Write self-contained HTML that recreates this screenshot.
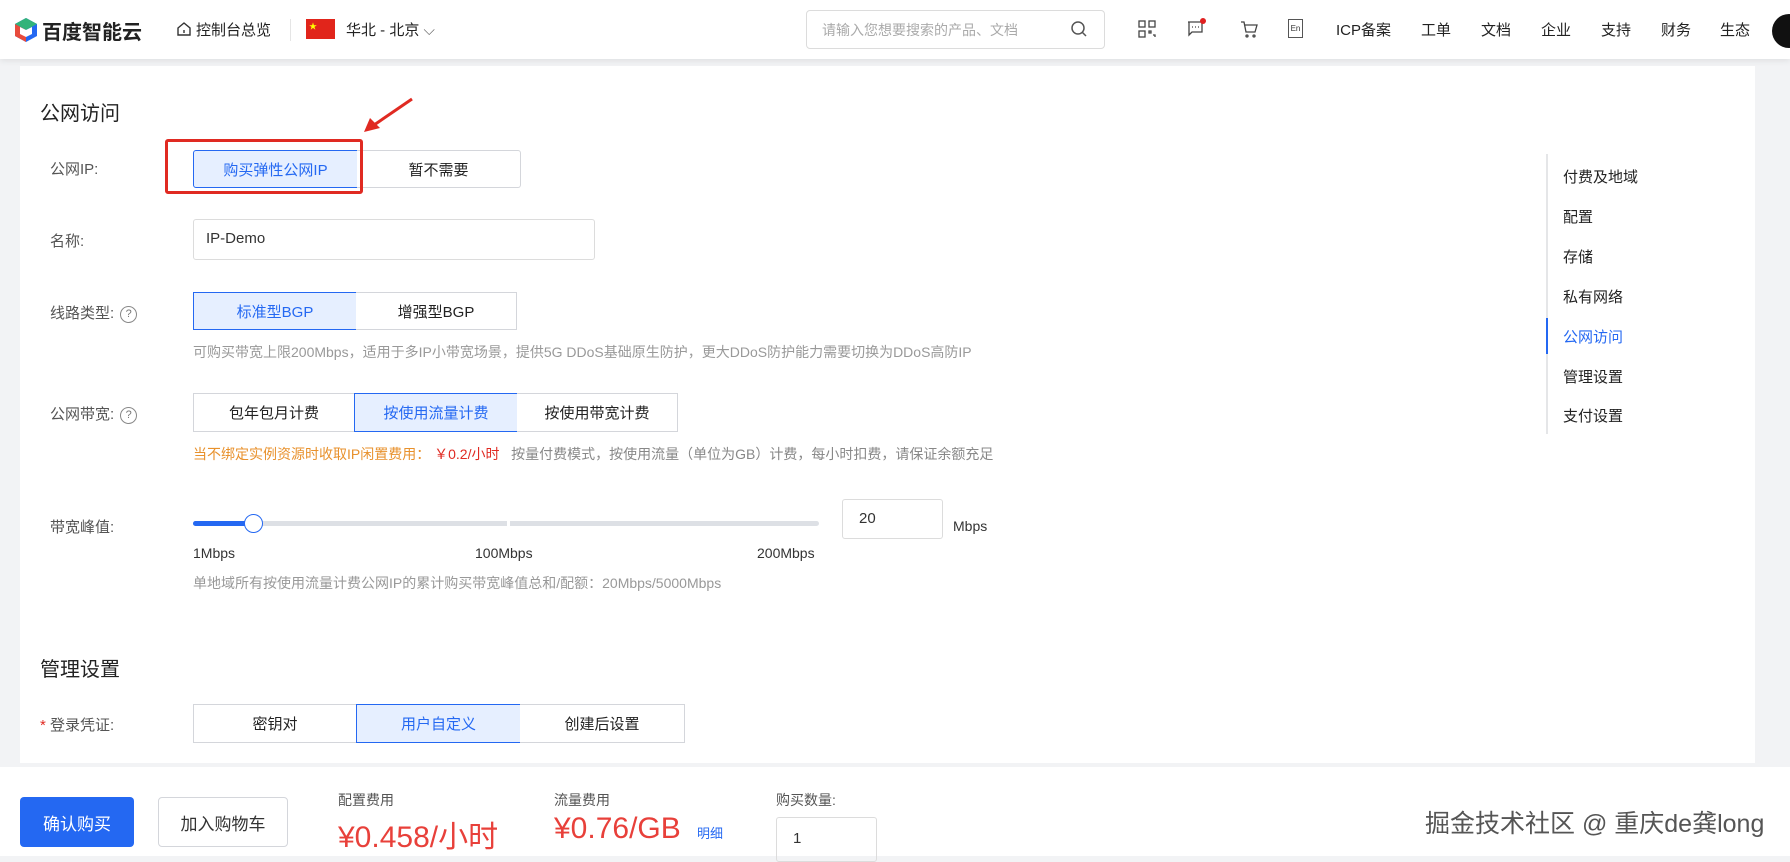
<!DOCTYPE html>
<html><head><meta charset="utf-8"><style>
*{margin:0;padding:0;box-sizing:border-box}
body{width:1790px;height:856px;overflow:hidden;background:#f2f3f5;font-family:"Liberation Sans","Noto Sans CJK SC",sans-serif;color:#333;position:relative;font-size:15px}
.a{position:absolute;white-space:nowrap}
.hdr{position:absolute;left:0;top:0;width:1790px;height:59px;background:#fff;box-shadow:0 2px 6px rgba(0,0,0,.08);z-index:2}
.card{position:absolute;left:20px;top:66px;width:1735px;height:697px;background:#fff}
.btn{position:absolute;border:1px solid #d4d6db;background:#fff;display:flex;align-items:center;justify-content:center;font-size:15px;color:#222}
.btn.on{background:#e6efff;border-color:#2468f2;color:#2468f2}
.lbl{position:absolute;font-size:15px;color:#555}
.help{display:inline-block;width:17px;height:17px;border:1.3px solid #888;border-radius:50%;font-size:11px;text-align:center;line-height:15px;color:#777;margin-left:6px;vertical-align:1px}
.gray{color:#999;font-size:14px}
.nav{font-size:15px;color:#222}
</style></head><body>
<div class="hdr">
  <svg class="a" style="left:14px;top:17px" width="24" height="26" viewBox="0 0 24 26"><path d="M12 1 L23 7 L23 19 L12 25 L1 19 L1 7Z" fill="#2468f2"/><path d="M12 1 L23 7 L12 13 L1 7Z" fill="#32b37a"/><path d="M1 7 L12 13 L12 25 L1 19Z" fill="#e84b3c"/><path d="M6 10 L12 13 L18 10 L18 17 L12 20 L6 17Z" fill="#fff"/></svg>
  <div class="a" style="left:42px;top:16px;font-size:20px;font-weight:bold;color:#222">百度智能云</div>
  <svg class="a" style="left:176px;top:21px" width="16" height="16" viewBox="0 0 16 16"><path d="M2 7 L8 2 L14 7 V14 H2Z" fill="none" stroke="#333" stroke-width="1.4"/><path d="M8 9v3" stroke="#333" stroke-width="1.4"/></svg>
  <div class="a nav" style="left:196px;top:19px">控制台总览</div>
  <div class="a" style="left:290px;top:19px;width:1px;height:22px;background:#e5e5e5"></div>
  <div class="a" style="left:306px;top:19px;width:29px;height:20px;background:#e1251b"><span style="position:absolute;left:3px;top:2px;color:#ff0;font-size:8px">★</span></div>
  <div class="a nav" style="left:346px;top:19px">华北 - 北京 <span style="color:#666">⌵</span></div>
  <div class="a" style="left:806px;top:10px;width:299px;height:39px;border:1px solid #dcdcdc;border-radius:4px"></div>
  <div class="a" style="left:822px;top:20px;color:#aaa;font-size:14px">请输入您想要搜索的产品、文档</div>
  <svg class="a" style="left:1070px;top:20px" width="18" height="18" viewBox="0 0 18 18"><circle cx="8" cy="8" r="6" fill="none" stroke="#555" stroke-width="1.5"/><path d="M12.5 12.5 L16 16" stroke="#555" stroke-width="1.5"/></svg>
  <svg class="a" style="left:1138px;top:20px" width="18" height="18" viewBox="0 0 18 18" fill="none" stroke="#444" stroke-width="1.3"><rect x="1" y="1" width="6" height="6"/><rect x="11" y="1" width="6" height="6"/><rect x="1" y="11" width="6" height="6"/><path d="M11 11h2v2h-2zM15 15h2v2"/></svg>
  <svg class="a" style="left:1186px;top:17px" width="22" height="22" viewBox="0 0 22 22" fill="none" stroke="#444" stroke-width="1.3"><path d="M2 5h14v10H6l-3 3V5"/><circle cx="17" cy="4" r="3" fill="#e02020" stroke="none"/><path d="M6 10h1M9 10h1M12 10h1"/></svg>
  <svg class="a" style="left:1239px;top:19px" width="20" height="20" viewBox="0 0 20 20" fill="none" stroke="#444" stroke-width="1.3"><path d="M2 3h3l2 10h9l2-7H6"/><circle cx="8" cy="17" r="1"/><circle cx="15" cy="17" r="1"/></svg>
  <div class="a" style="left:1288px;top:19px;width:15px;height:19px;border:1px solid #555;font-size:8px;text-align:center;line-height:17px">En</div>
  <div class="a nav" style="left:1336px;top:19px">ICP备案</div>
  <div class="a nav" style="left:1421px;top:19px">工单</div>
  <div class="a nav" style="left:1481px;top:19px">文档</div>
  <div class="a nav" style="left:1541px;top:19px">企业</div>
  <div class="a nav" style="left:1601px;top:19px">支持</div>
  <div class="a nav" style="left:1661px;top:19px">财务</div>
  <div class="a nav" style="left:1720px;top:19px">生态</div>
  <div class="a" style="left:1772px;top:14px;width:34px;height:34px;border-radius:50%;background:#111"></div>
</div>
<div class="card"></div>
<div class="a" style="left:40px;top:97px;font-size:20px;color:#222">公网访问</div>
<div class="lbl" style="left:50px;top:158px">公网IP:</div>
<div class="btn on" style="left:193px;top:150px;width:165px;height:38px;border-radius:3px 0 0 3px">购买弹性公网IP</div>
<div class="btn" style="left:357px;top:150px;width:164px;height:38px;border-left:none;border-radius:0 3px 3px 0">暂不需要</div>
<div class="a" style="left:165px;top:139px;width:198px;height:55px;border:3px solid #e02a22;border-radius:3px"></div>
<svg class="a" style="left:360px;top:96px" width="56" height="40" viewBox="0 0 56 40"><path d="M52 3 L14 29" stroke="#e02a22" stroke-width="3"/><path d="M4 36 L10 22 L20 32Z" fill="#e02a22"/></svg>
<div class="lbl" style="left:50px;top:230px">名称:</div>
<div class="a" style="left:193px;top:219px;width:402px;height:41px;border:1px solid #dcdcdc;border-radius:3px;padding:10px 12px;font-size:15px">IP-Demo</div>
<div class="lbl" style="left:50px;top:302px">线路类型:<span class="help">?</span></div>
<div class="btn on" style="left:193px;top:292px;width:164px;height:38px">标准型BGP</div>
<div class="btn" style="left:356px;top:292px;width:161px;height:38px;border-left:none">增强型BGP</div>
<div class="a gray" style="left:193px;top:342px">可购买带宽上限200Mbps，适用于多IP小带宽场景，提供5G DDoS基础原生防护，更大DDoS防护能力需要切换为DDoS高防IP</div>
<div class="lbl" style="left:50px;top:403px">公网带宽:<span class="help">?</span></div>
<div class="btn" style="left:193px;top:393px;width:162px;height:39px">包年包月计费</div>
<div class="btn on" style="left:354px;top:393px;width:164px;height:39px">按使用流量计费</div>
<div class="btn" style="left:517px;top:393px;width:161px;height:39px;border-left:none">按使用带宽计费</div>
<div class="a" style="left:193px;top:444px;font-size:14px;color:#e8912c">当不绑定实例资源时收取IP闲置费用： <span style="color:#e02a22">￥0.2/小时</span> <span style="color:#888">&nbsp; 按量付费模式，按使用流量（单位为GB）计费，每小时扣费，请保证余额充足</span></div>
<div class="lbl" style="left:50px;top:516px">带宽峰值:</div>
<div class="a" style="left:193px;top:521px;width:626px;height:5px;background:#dde0e5;border-radius:3px"></div>
<div class="a" style="left:193px;top:521px;width:60px;height:5px;background:#2468f2;border-radius:3px"></div>
<div class="a" style="left:507px;top:519px;width:3px;height:9px;background:#fff"></div>
<div class="a" style="left:244px;top:514px;width:19px;height:19px;border-radius:50%;background:#fff;border:1.5px solid #2468f2"></div>
<div class="a" style="left:193px;top:545px;font-size:14px">1Mbps</div>
<div class="a" style="left:475px;top:545px;font-size:14px">100Mbps</div>
<div class="a" style="left:757px;top:545px;font-size:14px">200Mbps</div>
<div class="a" style="left:842px;top:499px;width:101px;height:40px;border:1px solid #dcdcdc;border-radius:3px;padding:10px 16px">20</div>
<div class="a" style="left:953px;top:518px;font-size:14px">Mbps</div>
<div class="a gray" style="left:193px;top:573px">单地域所有按使用流量计费公网IP的累计购买带宽峰值总和/配额：20Mbps/5000Mbps</div>
<div class="a" style="left:40px;top:653px;font-size:20px;color:#222">管理设置</div>
<div class="lbl" style="left:40px;top:714px"><span style="color:#e02a22">*</span> 登录凭证:</div>
<div class="btn" style="left:193px;top:704px;width:164px;height:39px">密钥对</div>
<div class="btn on" style="left:356px;top:704px;width:165px;height:39px">用户自定义</div>
<div class="btn" style="left:520px;top:704px;width:165px;height:39px;border-left:none">创建后设置</div>
<div class="a" style="left:1546px;top:154px;width:2px;height:280px;background:#e5e6e8"></div>
<div class="a" style="left:1546px;top:318px;width:2px;height:36px;background:#2468f2"></div>
<div class="a nav" style="left:1563px;top:166px">付费及地域</div>
<div class="a nav" style="left:1563px;top:206px">配置</div>
<div class="a nav" style="left:1563px;top:246px">存储</div>
<div class="a nav" style="left:1563px;top:286px">私有网络</div>
<div class="a nav" style="left:1563px;top:326px;color:#2468f2">公网访问</div>
<div class="a nav" style="left:1563px;top:366px">管理设置</div>
<div class="a nav" style="left:1563px;top:405px">支付设置</div>
<div class="a" style="left:0;top:767px;width:1790px;height:89px;background:#fff"></div>
<div class="a" style="left:20px;top:797px;width:114px;height:50px;background:#2468f2;border-radius:4px;color:#fff;font-size:17px;display:flex;align-items:center;justify-content:center">确认购买</div>
<div class="a" style="left:158px;top:797px;width:130px;height:50px;border:1px solid #d4d6db;border-radius:4px;font-size:17px;display:flex;align-items:center;justify-content:center">加入购物车</div>
<div class="a" style="left:338px;top:790px;font-size:14px;color:#555">配置费用</div>
<div class="a" style="left:338px;top:812px;font-size:30px;color:#e8403a">¥0.458/小时</div>
<div class="a" style="left:554px;top:790px;font-size:14px;color:#555">流量费用</div>
<div class="a" style="left:554px;top:812px;font-size:30px;color:#e8403a">¥0.76/GB</div>
<div class="a" style="left:697px;top:823px;font-size:13px;color:#2468f2">明细</div>
<div class="a" style="left:776px;top:790px;font-size:14px;color:#555">购买数量:</div>
<div class="a" style="left:776px;top:817px;width:101px;height:45px;border:1px solid #dcdcdc;border-radius:3px;padding:12px 16px">1</div>
<div class="a" style="left:1425px;top:804px;font-size:25px;color:#555;text-shadow:0 0 2px #fff">掘金技术社区 @ 重庆de龚long</div>
</body></html>
